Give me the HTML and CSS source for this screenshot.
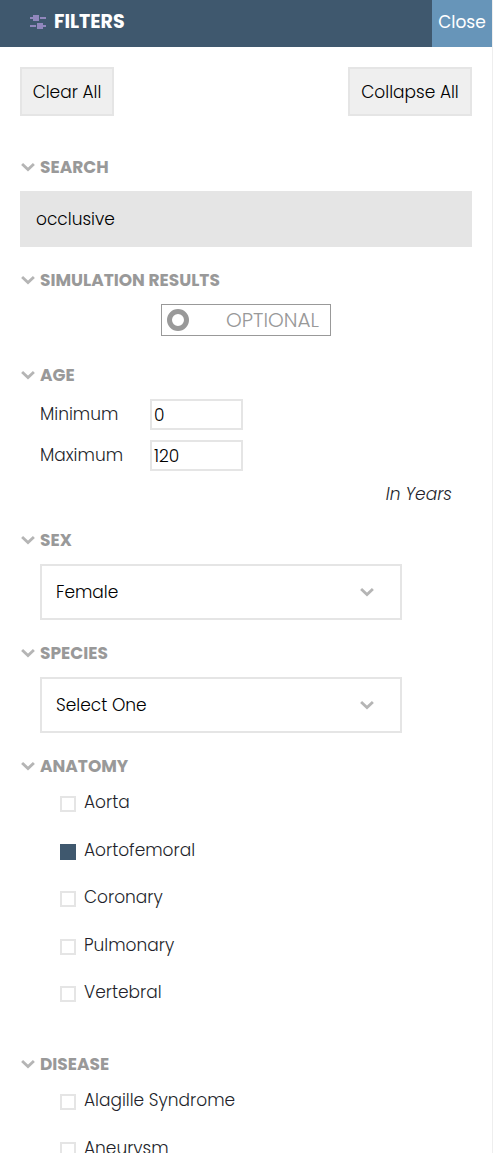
FILE: index.html
```html
<!DOCTYPE html>
<html lang="en">
<head>
  <meta charset="UTF-8" />
  <meta name="viewport" content="width=device-width, initial-scale=1.0">
  <title>Filters</title>
  <link rel="stylesheet" href="styles.css">
</head>
<body>
  <svg class="symbols" aria-hidden="true">
    <symbol id="chevron" viewBox="0 0 16 16">
      <path d="M2.1 4.9 L8 10.5 L13.9 4.9" fill="none" stroke="currentColor" stroke-width="2.8" />
    </symbol>
  </svg>

  <div class="filter-panel">
    <header class="panel-header">
      <h2>
        <svg class="filter-icon" viewBox="0 0 16 16" aria-hidden="true">
          <path d="M0 3h3v2H0z M3 1h6v6H3z M10 3h6v2h-6z M0 11h6v2H0z M7 9h6v6H7z M13 11h3v2h-3z" fill="#9187bd" />
        </svg>
        FILTERS
      </h2>
      <button class="close-btn" type="button">Close</button>
    </header>

    <form class="filters">
      <div class="actions">
        <button class="clear-btn" id="clear-all" type="button">Clear All</button>
        <button class="collapse-btn" id="collapse-all" type="button">Collapse All</button>
      </div>

      <section>
        <h3><button type="button"><svg><use href="#chevron" /></svg>SEARCH</button></h3>
        <div class="content">
          <input class="search" type="text" value="occlusive" aria-label="Search">
        </div>
      </section>

      <section>
        <h3><button type="button"><svg><use href="#chevron" /></svg>SIMULATION RESULTS</button></h3>
        <div class="content">
          <button class="toggle" type="button"><span class="ring"></span>OPTIONAL</button>
        </div>
      </section>

      <section>
        <h3><button type="button"><svg><use href="#chevron" /></svg>AGE</button></h3>
        <div class="content">
          <div class="age-grid">
            <label for="age-min">Minimum</label>
            <input type="text" id="age-min" value="0">
            <label for="age-max">Maximum</label>
            <input type="text" id="age-max" value="120">
          </div>
          <p class="units">In Years</p>
        </div>
      </section>

      <section>
        <h3><button type="button"><svg><use href="#chevron" /></svg>SEX</button></h3>
        <div class="content select-box">
          <select aria-label="Sex">
            <option>Select One</option>
            <option selected>Female</option>
            <option>Male</option>
          </select>
          <svg><use href="#chevron" /></svg>
        </div>
      </section>

      <section>
        <h3><button type="button"><svg><use href="#chevron" /></svg>SPECIES</button></h3>
        <div class="content select-box">
          <select aria-label="Species">
            <option>Select One</option>
            <option>Human</option>
            <option>Animal</option>
          </select>
          <svg><use href="#chevron" /></svg>
        </div>
      </section>

      <section>
        <h3><button type="button"><svg><use href="#chevron" /></svg>ANATOMY</button></h3>
        <ul class="content">
          <li><input type="checkbox" id="aorta"><label for="aorta">Aorta</label></li>
          <li><input type="checkbox" id="aortofemoral" checked><label for="aortofemoral">Aortofemoral</label></li>
          <li><input type="checkbox" id="coronary"><label for="coronary">Coronary</label></li>
          <li><input type="checkbox" id="pulmonary"><label for="pulmonary">Pulmonary</label></li>
          <li><input type="checkbox" id="vertebral"><label for="vertebral">Vertebral</label></li>
        </ul>
      </section>

      <section>
        <h3><button type="button"><svg><use href="#chevron" /></svg>DISEASE</button></h3>
        <ul class="content">
          <li><input type="checkbox" id="alagille"><label for="alagille">Alagille Syndrome</label></li>
          <li><input type="checkbox" id="aneurysm"><label for="aneurysm">Aneurysm</label></li>
        </ul>
      </section>
    </form>
  </div>

  <script>
    const sections = document.querySelectorAll('section');
    const collapseAll = document.getElementById('collapse-all');

    sections.forEach(section => {
      section.querySelector('h3 button').addEventListener('click', () => {
        section.classList.toggle('collapsed');
      });
    });

    collapseAll.addEventListener('click', () => {
      sections.forEach(section => section.classList.add('collapsed'));
    });

    document.getElementById('clear-all').addEventListener('click', () => {
      document.querySelector('.search').value = '';
      document.getElementById('age-min').value = 0;
      document.getElementById('age-max').value = 120;
      document.querySelectorAll('select').forEach(s => s.selectedIndex = 0);
      document.querySelectorAll('input[type="checkbox"]').forEach(c => c.checked = false);
    });
  </script>
</body>
</html>
```
FILE: styles.css
```css
* {
  box-sizing: border-box;
}
body {
  margin: 0;
  font-family: Poppins, Inter, sans-serif;
  font-size: 17px;
  font-weight: 300;
  line-height: 24px;
  color: #231f2b;
  background: #fff;
}
button, input, select {
  font: inherit;
  color: #000;
  border-radius: 0;
}
button {
  cursor: pointer;
}
.symbols {
  display: none;
}
.filter-panel {
  height: 100vh;
  overflow-y: auto;
  scrollbar-width: none;
  border-right: 1px solid #eee;
}
.panel-header {
  display: flex;
  justify-content: space-between;
  height: 47px;
  background: #3f586e;
}
.panel-header h2 {
  display: flex;
  align-items: center;
  gap: 8px;
  margin: 0;
  padding: 0 0 4px 30px;
  font-size: 19px;
  font-weight: 700;
  color: #fff;
}
.filter-icon {
  width: 16px;
  height: 16px;
}
.close-btn {
  width: 60px;
  padding: 0 0 3px;
  border: none;
  background: #6795b9;
  color: #fff;
  font-weight: 400;
}
.filters {
  padding: 20px;
}
.actions {
  display: flex;
  justify-content: space-between;
  margin-bottom: 39px;
}
.actions button {
  height: 49px;
  padding: 0;
  border: 2px solid #e5e5e5;
  background: #efefef;
}
.clear-btn {
  width: 94px;
}
.collapse-btn {
  width: 124px;
}
section {
  margin-bottom: 21px;
}
h3 {
  margin: 0 0 12px;
}
h3 button {
  display: flex;
  align-items: center;
  gap: 4px;
  height: 24px;
  padding: 0;
  border: none;
  background: none;
  font-size: 17px;
  font-weight: 700;
  color: #999;
}
h3 svg, .select-box svg {
  width: 16px;
  height: 16px;
  color: #b5b5b5;
}
.collapsed .content {
  display: none;
}
.search {
  display: block;
  width: 100%;
  height: 56px;
  padding: 0 16px;
  border: none;
  background: #e5e5e5;
}
.toggle {
  display: flex;
  align-items: center;
  justify-content: space-between;
  width: 170px;
  height: 32px;
  margin: 0 auto 27px;
  padding: 0 11px 0 5px;
  border: 1px solid #999;
  background: #fff;
  font-size: 20px;
  color: #999;
}
.ring {
  width: 22px;
  height: 22px;
  border: 5px solid #999;
  border-radius: 50%;
}
.age-grid {
  display: grid;
  grid-template-columns: 110px 93px;
  row-gap: 10px;
  padding-left: 20px;
}
.age-grid label {
  line-height: 30px;
}
.age-grid input {
  width: 100%;
  height: 31px;
  padding: 0 2px;
  border: 2px solid #e5e5e5;
}
.units {
  margin: 11px 20px 22px;
  font-style: italic;
  text-align: right;
}
.select-box {
  position: relative;
  width: 80%;
  margin-left: 20px;
}
.select-box select {
  display: block;
  width: 100%;
  height: 56px;
  padding: 0 48px 0 14px;
  border: 2px solid #e5e5e5;
  background: #fff;
  appearance: none;
}
.select-box svg {
  position: absolute;
  top: 20px;
  right: 27px;
  pointer-events: none;
}
ul {
  margin: 0;
  padding: 0 0 3px 40px;
  list-style: none;
}
li {
  display: flex;
  align-items: flex-start;
  gap: 8px;
  height: 48px;
}
li:nth-child(even) {
  height: 47px;
}
li input {
  width: 16px;
  height: 16px;
  margin: 6px 0 0;
  border: 2px solid #e5e5e5;
  background: #fff;
  appearance: none;
}
li input:checked {
  border-color: #3f586e;
  background: #3f586e;
}
```
